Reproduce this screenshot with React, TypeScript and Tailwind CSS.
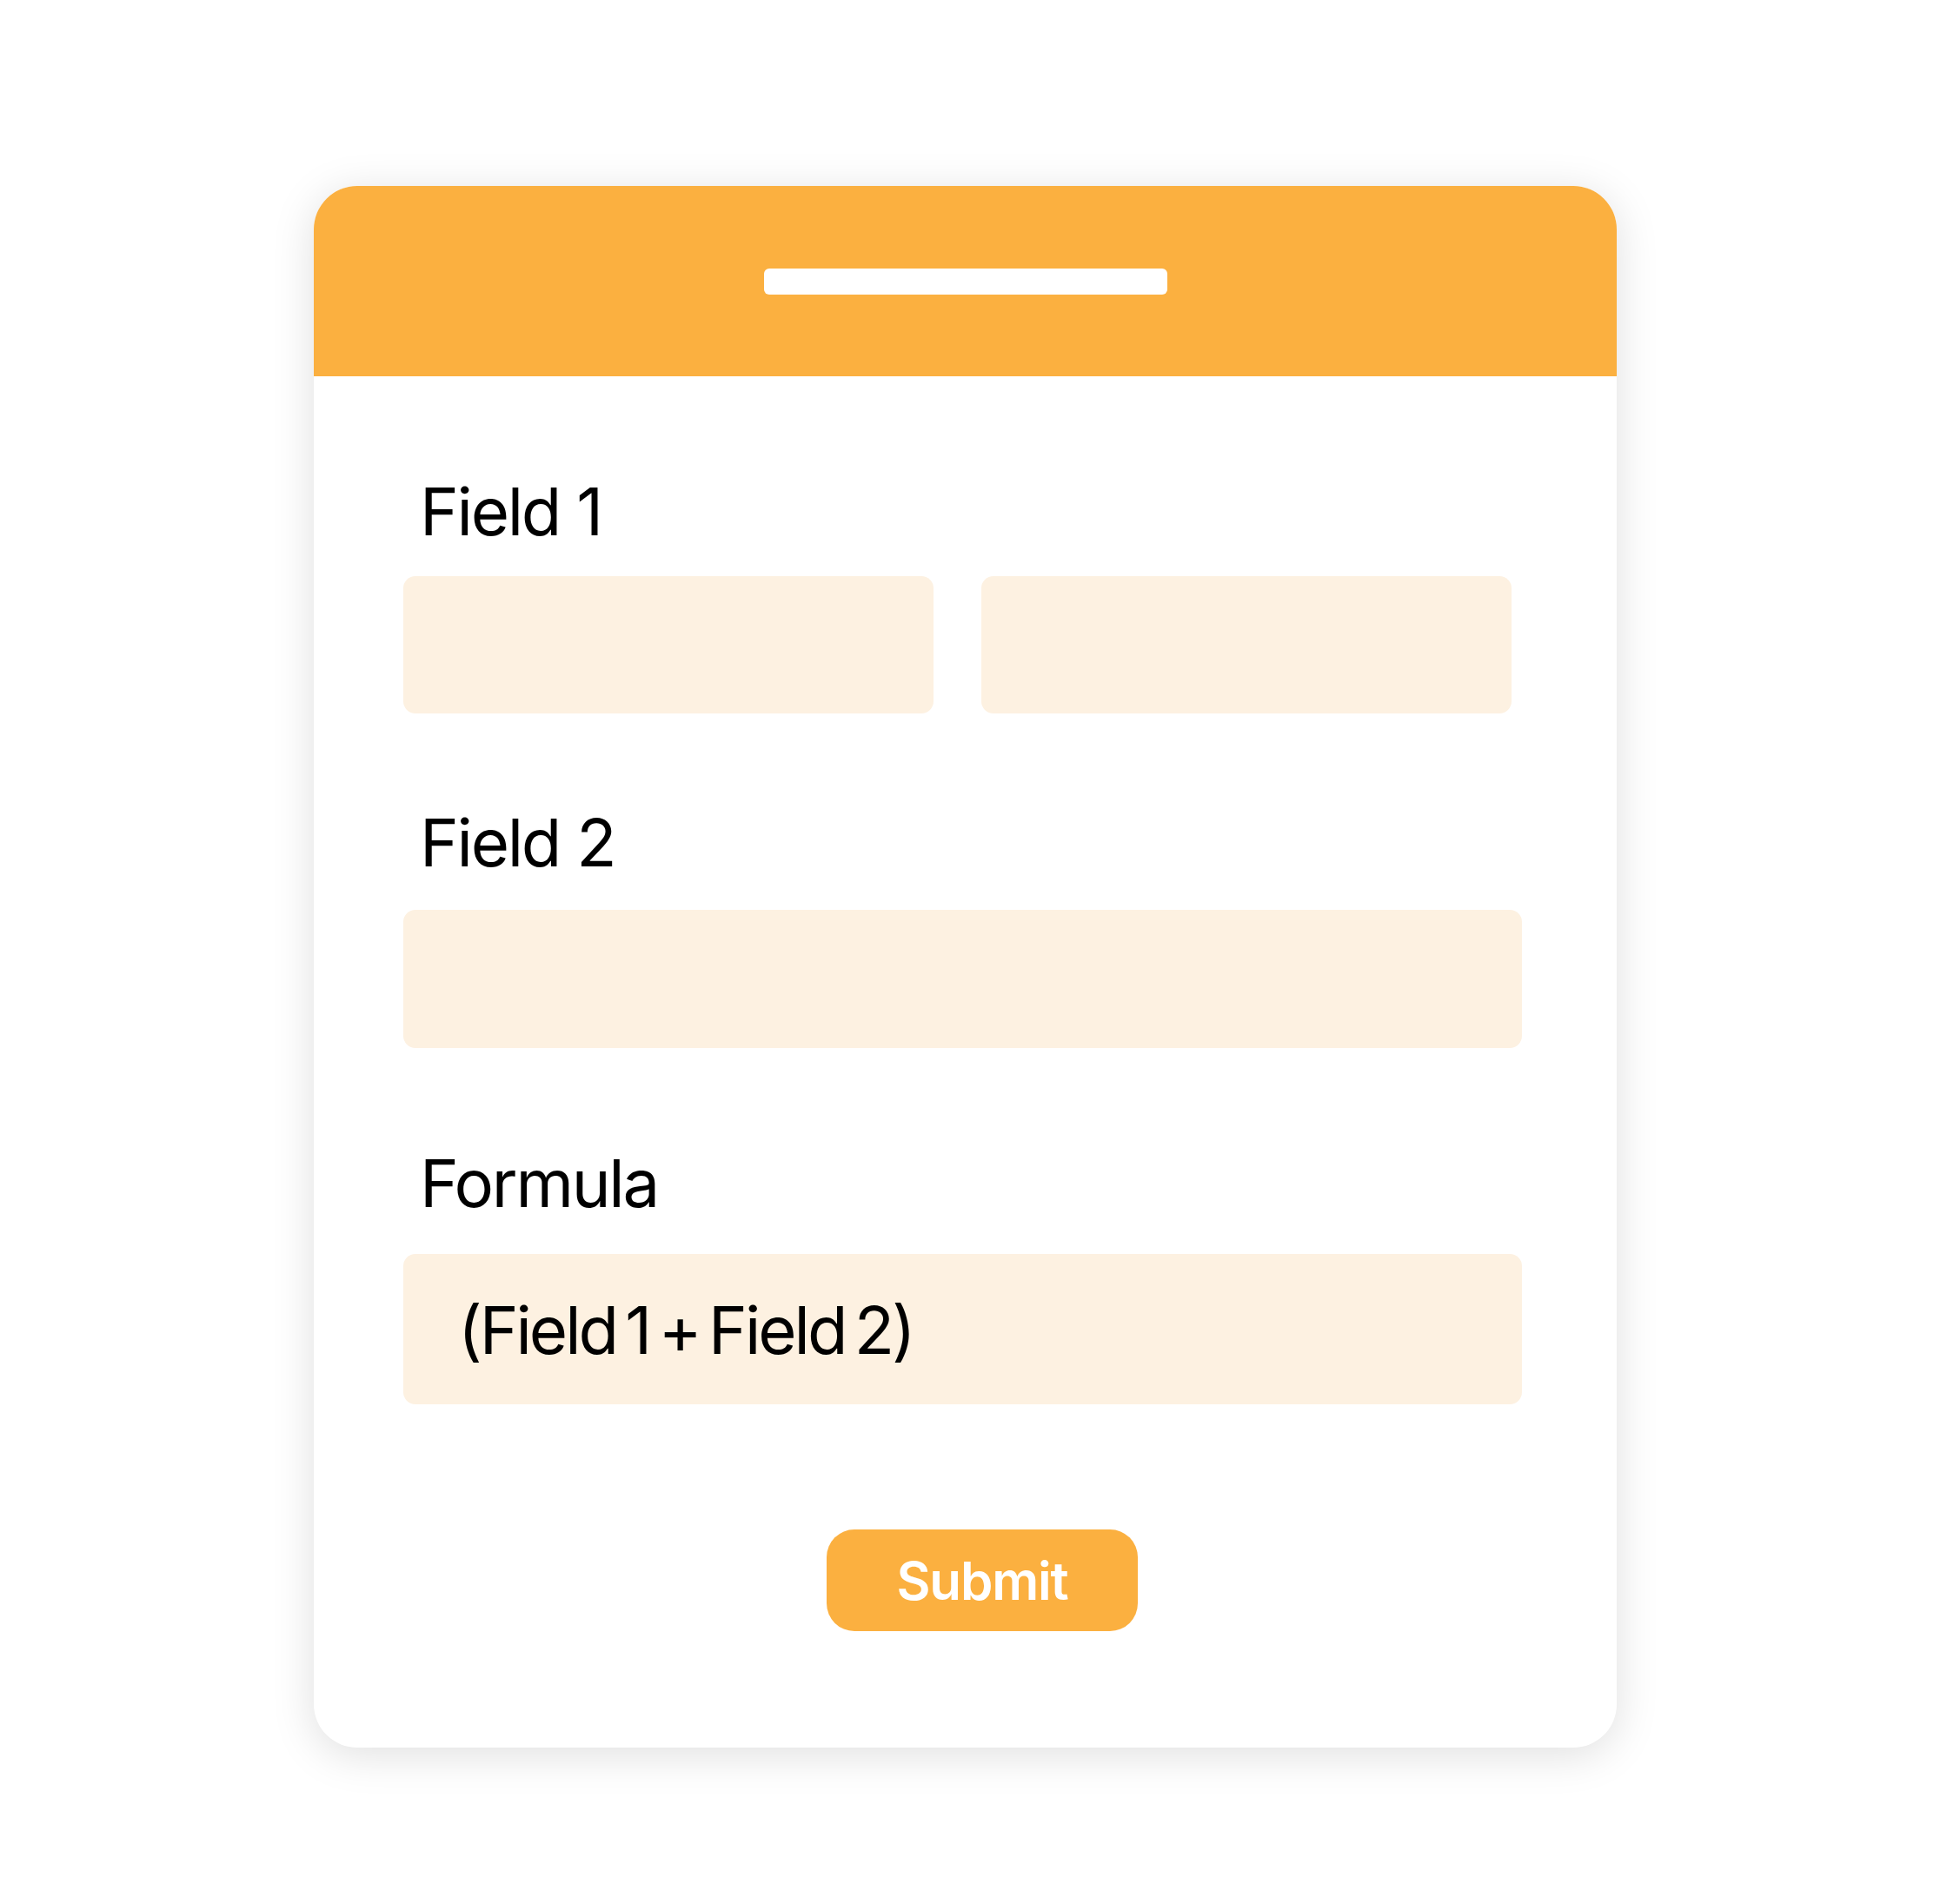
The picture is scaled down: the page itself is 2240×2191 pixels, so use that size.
const font = { fontFamily: 'Inter, "Noto Sans", sans-serif' };

function Label({ children, className = '' }: { children: React.ReactNode; className?: string }) {
  return (
    <div className={`pl-[19px] text-[76px] leading-none tracking-[-0.03em] text-black ${className}`}>
      {children}
    </div>
  );
}

function Input({ className = '', children }: { className?: string; children?: React.ReactNode }) {
  return <div className={`rounded-[14px] bg-[#fdf1e1] ${className}`}>{children}</div>;
}

export default function App() {
  return (
    <div className="min-h-[2191px] w-[2240px] bg-white pt-[214px]" style={font}>
      <div className="ml-[361px] w-[1499px] rounded-[50px] bg-white shadow-[0_8px_50px_rgba(0,0,0,0.13)]">
        {/* header strip with title placeholder */}
        <div className="flex h-[219px] items-center justify-center rounded-t-[50px] bg-[#fbb040]">
          <div className="h-[30px] w-[464px] rounded-[6px] bg-white" />
        </div>

        <div className="pl-[103px] pr-[109px] pt-[117px] pb-[134px]">
          <Label>Field 1</Label>
          <div className="mt-[37px] flex gap-[55px]">
            <Input className="h-[158px] w-[610px]" />
            <Input className="h-[158px] w-[610px]" />
          </div>

          <Label className="mt-[110px]">Field 2</Label>
          <Input className="mt-[40px] h-[159px] w-full" />

          <Label className="mt-[117px]">Formula</Label>
          <Input className="mt-[44px] flex h-[173px] w-full items-center pl-[63px]">
            <span className="text-[76px] leading-none tracking-[-0.04em] text-black [word-spacing:-8px]">
              (Field 1 + Field 2)
            </span>
          </Input>

          <div className="mt-[144px] flex justify-center pl-[45px]">
            <button className="flex h-[117px] w-[358px] items-center justify-center rounded-[32px] bg-[#fbb040] text-[60px] font-semibold leading-none tracking-[-0.02em] text-white">
              Submit
            </button>
          </div>
        </div>
      </div>
    </div>
  );
}
